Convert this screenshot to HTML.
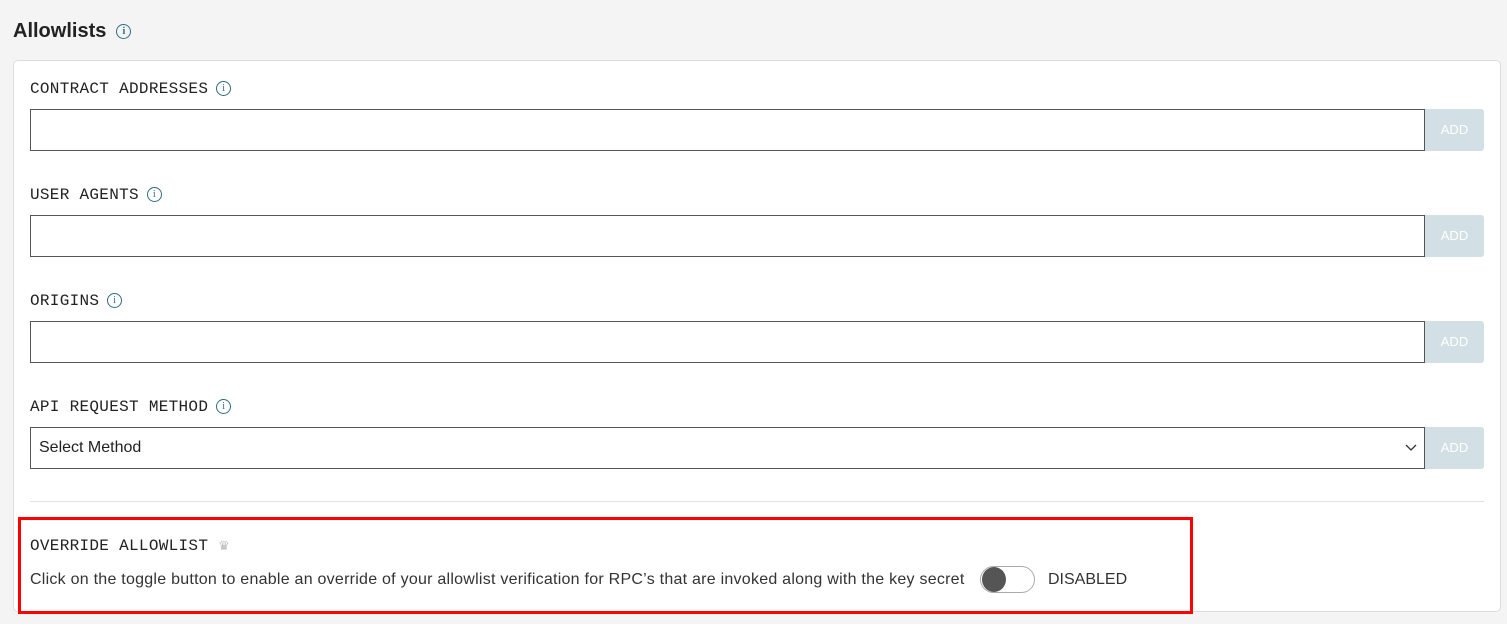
<!DOCTYPE html>
<html><head><style>
body{margin:0;background:#f4f4f4;width:1507px;height:624px;position:relative;font-family:"Liberation Sans",sans-serif;color:#222;overflow:hidden}
.abs{position:absolute}
h1{position:absolute;left:13px;top:20px;margin:0;font-size:20px;font-weight:bold;color:#222}
.card{position:absolute;left:13px;top:60px;width:1486px;height:550px;background:#fff;border:1px solid #ddd;border-radius:5px}
.lbl{position:absolute;left:30px;font-family:"Liberation Mono",monospace;font-size:16px;color:#222;letter-spacing:0.3px}
.info{display:inline-block;width:13px;height:13px;border:1.3px solid #2e6b85;border-radius:50%;color:#2e6b85;font-size:10px;line-height:13px;text-align:center;font-family:"Liberation Serif",serif;vertical-align:2px;margin-left:8px}
.inp{position:absolute;left:30px;width:1393px;height:40px;border:1px solid #555;background:#fff}
.add{position:absolute;left:1425px;width:59px;height:42px;background:#d2e0e6;border-radius:0 3px 3px 0;color:#fff;font-size:13px;text-align:center;line-height:42px}
</style></head><body>
<h1>Allowlists<span class="info" style="margin-left:10px;vertical-align:3px">i</span></h1>
<div class="card"></div>
<div class="lbl" style="top:80px">CONTRACT ADDRESSES<span class="info">i</span></div>
<div class="inp" style="top:109px"></div><div class="add" style="top:109px">ADD</div>
<div class="lbl" style="top:186px">USER AGENTS<span class="info">i</span></div>
<div class="inp" style="top:215px"></div><div class="add" style="top:215px">ADD</div>
<div class="lbl" style="top:292px">ORIGINS<span class="info">i</span></div>
<div class="inp" style="top:321px"></div><div class="add" style="top:321px">ADD</div>
<div class="lbl" style="top:398px">API REQUEST METHOD<span class="info">i</span></div>
<div class="inp" style="top:427px"><span class="abs" style="left:8px;top:11px;font-size:16px;color:#222">Select Method</span>
<svg class="abs" style="left:1374px;top:14px" width="12" height="10"><path d="M1 3l5 5 5-5" fill="none" stroke="#333" stroke-width="1.3"/></svg></div>
<div class="add" style="top:427px">ADD</div>
<div class="abs" style="left:30px;top:501px;width:1454px;height:1px;background:#e2e2e2"></div>
<div class="abs" style="left:18px;top:517px;width:1169px;height:91px;border:3px solid #f00"></div>
<div class="lbl" style="top:537px">OVERRIDE ALLOWLIST <span style="font-size:13px;color:#bbb;font-family:'DejaVu Sans',sans-serif">♛</span></div>
<div class="abs" style="left:30px;top:571px;font-size:16px;color:#333;letter-spacing:0.25px">Click on the toggle button to enable an override of your allowlist verification for RPC’s that are invoked along with the key secret</div>
<div class="abs" style="left:980px;top:566px;width:53px;height:25px;border:1.5px solid #aaa;border-radius:14px;background:#fff"></div>
<div class="abs" style="left:982px;top:567px;width:24px;height:25px;border-radius:50%;background:#555"></div>
<div class="abs" style="left:1048px;top:571px;font-size:16px;color:#333">DISABLED</div>
</body></html>
